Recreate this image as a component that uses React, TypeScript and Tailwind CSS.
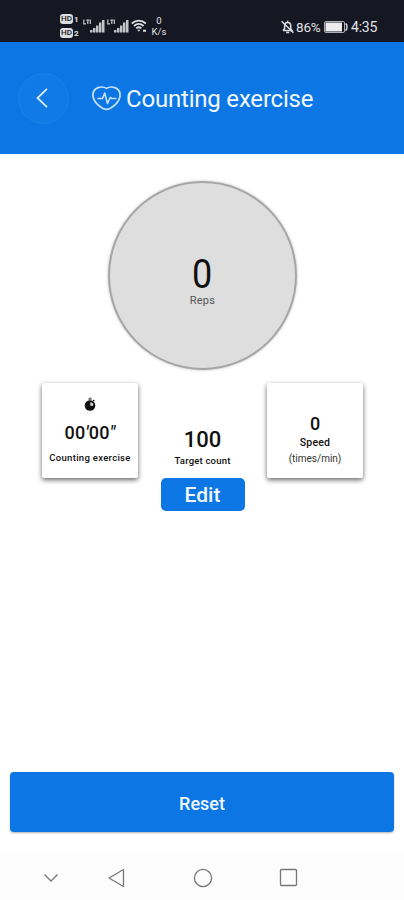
import type { ReactNode } from "react"

const HdBadge = ({ sim }: { sim: string }) => (
    <div className="flex h-[10px] items-end gap-px">
        <span className="flex h-[10px] w-[13px] items-center justify-center rounded-[3px] bg-[#dcdde0] text-[8px] font-medium leading-none text-[#151722]">HD</span>
        <span className="text-[8px] font-bold leading-[8px]">{sim}</span>
    </div>
)

const Signal = () => (
    <svg width="22" height="15" viewBox="0 0 22 15" fill="#c4c5ca">
        <path d="M0.800 0.500v4.300h2.200M3.300 1.200h3M4.800 1.200v3.800M7.300 0.500v4.500" fill="none" stroke="#c4c5ca" strokeWidth="1.200" />
        <rect x="7" y="11" width="2.500" height="2.500" />
        <rect x="10" y="9" width="2.500" height="4.500" />
        <rect x="13" y="6.500" width="2.500" height="7" />
        <rect x="16" y="3.500" width="2.500" height="10" />
        <rect x="19" y="1" width="2.500" height="12.500" />
    </svg>
)

const Wifi = () => (
    <svg width="16" height="14" viewBox="0 0 16 14" fill="none" stroke="#dcdde0" strokeWidth="1.800">
        <path d="M0.800 4.500C4.800 0.600 10.800 0.600 14.800 4.500M3 7C6 4.300 9.600 4.300 12.600 7M5.200 9.400c1.500-1.300 3.700-1.300 5.200 0" />
        <path d="M6.200 10.700h3.200L7.800 12.800z" fill="#dcdde0" stroke="none" />
        <path d="M12 11.700h3" strokeWidth="2" />
    </svg>
)

const BellOff = () => (
    <svg width="13" height="14" viewBox="0 0 13 14" fill="none" stroke="#dcdde0" strokeWidth="1.500">
        <path d="M2 10.500h9L9.700 8.700V5.500C9.700 3.600 8.500 2.500 6.700 2.500S3.600 3.600 3.600 5.500v3.200L2 10.500M5.200 12.500h3M6.700 0.800v1.700" />
        <path d="M0.600 1.300l11.800 11.400" />
    </svg>
)

const StatusBar = () => (
    <div className="flex h-[42px] items-start justify-between bg-[#151722] pl-[60px] pr-[26px] text-[#e3e4e7]">
        <div className="flex pt-[14px]">
            <div className="flex w-[23px] flex-col gap-[4px]">
                <HdBadge sim="1" />
                <HdBadge sim="2" />
            </div>
            <div className="flex gap-[2px] pt-[5px]">
                <Signal />
                <Signal />
                <Wifi />
            </div>
            <div className="ml-[3px] mt-[1px] flex w-[18px] flex-col items-center text-[9.500px] leading-[11px]">
                <span>0</span>
                <span>K/s</span>
            </div>
        </div>
        <div className="mt-[20px] flex h-[14px] items-center text-[14px] leading-[14px]">
            <BellOff />
            <span className="ml-[2px] w-[28px] text-[13.500px] tracking-[-0.200px]">86%</span>
            <svg className="mr-[3px]" width="24" height="12" viewBox="0 0 24 12">
                <rect x="0.500" y="0.500" width="20" height="11" rx="1.500" fill="none" stroke="#aeb0b5" />
                <rect x="1.500" y="1.500" width="16.500" height="9" fill="#ececee" />
                <path d="M21.500 2.500c2 1 2 6 0 7" fill="none" stroke="#d5d6da" strokeWidth="1.500" />
            </svg>
            <span className="w-[27px] tracking-[-0.200px]">4:35</span>
        </div>
    </div>
)

const Header = () => (
    <header className="flex h-[112px] items-center bg-[#0c77e4] pl-[18px] text-[#f0f7ff]">
        <button className="flex h-[51px] w-[51px] items-center justify-center rounded-full border border-[#1d80e7] bg-[#107be6] pr-[3px]">
            <svg width="12" height="20" viewBox="0 0 12 20" fill="none" stroke="#d9eaff" strokeWidth="1.800">
                <path d="M11 0.800L1.500 10l9.500 9.200" />
            </svg>
        </button>
        <svg className="ml-[23px]" width="29" height="25" viewBox="0 0 29 25" fill="none" stroke="#c5e0fc" strokeWidth="1.700" strokeLinejoin="round" strokeLinecap="round">
            <path d="M14.500 2.400C12.300 1 9 0.700 6.200 1.600C2 3 0.400 7 1.200 11.300C2.300 16 7.200 20.300 11 22.500Q14.500 24.300 18 22.500C21.800 20.300 26.700 16 27.800 11.300C28.600 7 27 3 22.800 1.600C20 0.700 16.700 1 14.500 2.400Z" />
            <path d="M6 12.500h4.500l2.200-5.500 2.800 10.500 2.800-6 1.500 1h4" strokeWidth="1.600" />
        </svg>
        <h1 className="ml-[5px] mt-[2px] text-[24px] leading-[30px] tracking-[-0.200px]">Counting exercise</h1>
    </header>
)

const Card = ({ children }: { children: ReactNode }) => (
    <div className="flex h-[95px] w-[96px] flex-col items-center whitespace-nowrap rounded-[2px] bg-white shadow-[0_2px_5px_rgba(0,0,0,0.6)]">
        {children}
    </div>
)

const Stopwatch = () => (
    <svg width="12" height="14" viewBox="0 0 12 14">
        <path d="M5 1h2v2H5z" stroke="#777" strokeWidth="1" fill="#777" />
        <path d="M9 4l1.300-1" stroke="#111" strokeWidth="1.300" />
        <circle cx="6" cy="8.500" r="5.300" fill="#111" />
        <path d="M6.300 5.300v3.400h3A3 3 0 0 0 6.300 5.300z" fill="#ddd" />
    </svg>
)

const NavBar = () => (
    <nav className="flex h-[45px] items-center bg-[#fcfcfc] pl-[43px]">
        <svg width="16" height="10" viewBox="0 0 16 10" fill="none" stroke="#777" strokeWidth="1.300">
            <path d="M1.500 1.500l6.500 6.500 6.500-6.500" />
        </svg>
        <svg className="ml-[49px]" width="17" height="20" viewBox="0 0 17 20" fill="none" stroke="#777" strokeWidth="1.300" strokeLinejoin="round">
            <path d="M15.500 1.500v17L1 10z" />
        </svg>
        <svg className="ml-[68px]" width="20" height="20" viewBox="0 0 20 20" fill="none" stroke="#777" strokeWidth="1.300">
            <circle cx="10" cy="10" r="8.600" />
        </svg>
        <svg className="ml-[66px]" width="19" height="19" viewBox="0 0 19 19" fill="none" stroke="#777" strokeWidth="1.300">
            <rect x="1.500" y="1.500" width="16" height="16" rx="1" />
        </svg>
    </nav>
)

export default function App() {
    return (
        <div className="flex h-[900px] w-[404px] flex-col bg-white font-['Roboto',sans-serif] text-[#111]">
            <StatusBar />
            <Header />
            <main className="flex flex-1 flex-col">
                <div className="ml-[108px] mt-[27px] flex h-[189px] w-[189px] flex-col items-center rounded-full border-2 border-[#a6a6a6] bg-[#dedede] pt-[72px] shadow-[0_0_3px_rgba(0,0,0,0.25)]">
                    <span className="scale-x-90 text-[40px] leading-[40px]">0</span>
                    <span className="text-[11px] leading-[12px] tracking-[0.200px] text-[#555]">Reps</span>
                </div>
                <div className="mt-[13px] flex justify-between pl-[42px] pr-[41px]">
                    <Card>
                        <div className="pt-[14px]"><Stopwatch /></div>
                        <span className="mt-[11px] text-[18px] font-medium leading-[22px] tracking-[0.300px]">00<i>'</i>00<i>"</i></span>
                        <span className="mt-[8px] text-[9.500px] font-medium leading-[12px] tracking-[0.300px]">Counting exercise</span>
                    </Card>
                    <div className="flex w-[84px] flex-col items-center pt-[43px]">
                        <span className="text-[22px] font-medium leading-[28px]">100</span>
                        <span className="text-[9.500px] font-medium leading-[14px] tracking-[0.200px]">Target count</span>
                        <button className="mt-[10px] h-[33px] w-[84px] rounded-[5px] bg-[#0c77e4] text-[21px] font-medium leading-[35px] text-[#f0f7ff]">Edit</button>
                    </div>
                    <Card>
                        <span className="mt-[29px] text-[18px] font-medium leading-[23px]">0</span>
                        <span className="mt-px text-[10.500px] font-medium leading-[13px] tracking-[0.200px]">Speed</span>
                        <span className="mt-[3px] text-[10px] leading-[13px] text-[#333]">(times/min)</span>
                    </Card>
                </div>
                <button className="mx-[10px] mb-[23px] mt-auto h-[60px] rounded-[4px] bg-[#0c77e4] pt-[3px] text-[18px] font-medium text-[#f0f7ff] shadow-[0_1px_2px_rgba(0,0,0,0.3)]">Reset</button>
            </main>
            <NavBar />
        </div>
    )
}
